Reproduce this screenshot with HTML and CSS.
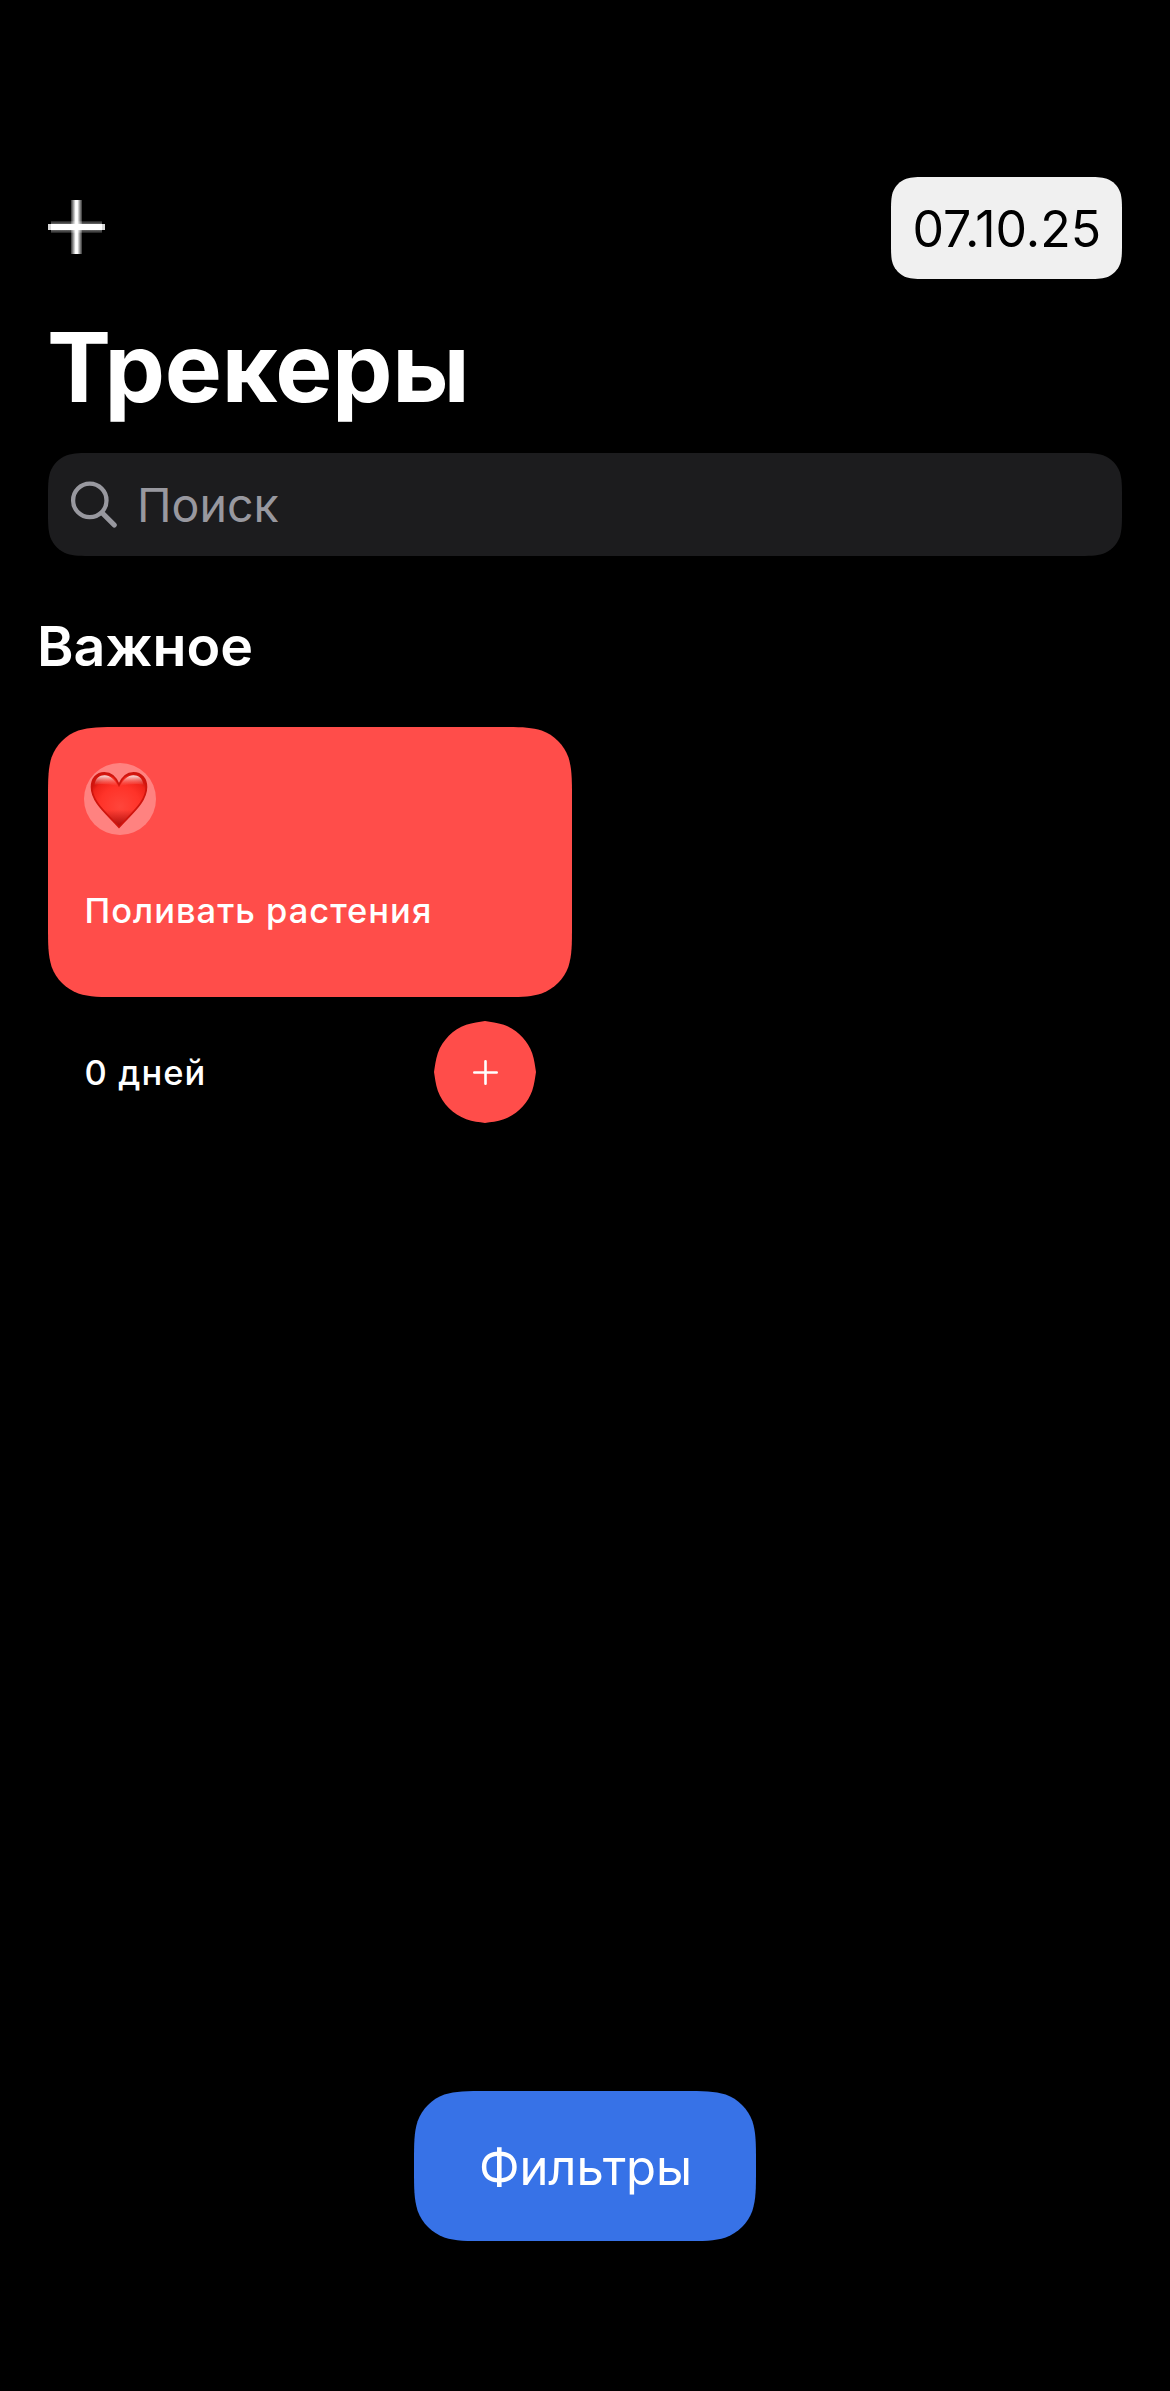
FILE: index.html
```
<!DOCTYPE html>
<html lang="ru">
<head>
<meta charset="utf-8">
<title>Трекеры</title>
<link rel="stylesheet" href="styles.css">
</head>
<body>
<main class="screen">
  <header class="topbar">
    <button class="add" aria-label="Добавить трекер">
      <svg width="57" height="54" viewBox="0 0 57 54">
        <defs>
          <linearGradient id="barH" x1="0" y1="0" x2="0" y2="1">
            <stop offset="0" stop-color="#fff" stop-opacity=".12"/>
            <stop offset=".24" stop-color="#fff" stop-opacity=".4"/>
            <stop offset=".27" stop-color="#fff"/>
            <stop offset=".73" stop-color="#fff"/>
            <stop offset=".76" stop-color="#fff" stop-opacity=".4"/>
            <stop offset="1" stop-color="#fff" stop-opacity=".12"/>
          </linearGradient>
          <linearGradient id="barV">
            <stop offset="0" stop-color="#fff" stop-opacity=".2"/>
            <stop offset=".42" stop-color="#fff"/>
            <stop offset=".58" stop-color="#fff"/>
            <stop offset="1" stop-color="#fff" stop-opacity=".2"/>
          </linearGradient>
        </defs>
        <rect x="3" y="21" width="51" height="12" fill="url(#barH)"/>
        <rect x="0" y="24" width="57" height="6" fill="#fff" fill-opacity=".85"/>
        <rect x="23" y="0" width="11" height="54" fill="url(#barV)"/>
      </svg>
    </button>
    <div class="date">07.10.25</div>
  </header>

  <h1 class="title"><span class="title-cap">Т</span>рекеры</h1>

  <div class="search">
    <svg class="search-icon" width="50" height="48" viewBox="0 0 50 48" fill="none" stroke="#98989f" stroke-linecap="round">
      <circle cx="21.800" cy="19.400" r="16.700" stroke-width="4.300"/>
      <path d="M34.300 32 46.300 44" stroke-width="5.200"/>
    </svg>
    <span class="placeholder">Поиск</span>
  </div>

  <section class="category">
    <h2 class="category-name">Важное</h2>
    <article class="tracker">
      <div class="card">
        <div class="emoji">
          <svg width="58" height="58" viewBox="0 0 58 58">
            <defs>
              <radialGradient id="heart" cx=".52" cy=".62" r=".62">
                <stop offset="0" stop-color="#ff453b"/>
                <stop offset=".6" stop-color="#ff3329"/>
                <stop offset=".88" stop-color="#f0241b"/>
                <stop offset="1" stop-color="#d4150e"/>
              </radialGradient>
              <linearGradient id="tip" x1="0" y1="0" x2="0" y2="1">
                <stop offset=".68" stop-color="#8e0000" stop-opacity="0"/>
                <stop offset="1" stop-color="#8e0000" stop-opacity=".75"/>
              </linearGradient>
              <linearGradient id="gloss" x1="0" y1="0" x2="0" y2="1">
                <stop offset="0" stop-color="#fff" stop-opacity=".9"/>
                <stop offset="1" stop-color="#ff8078" stop-opacity="0"/>
              </linearGradient>
            </defs>
            <path d="M29 13.800C26 6.200 20.500 1.800 14.300 1.800 6.700 1.800 1.600 8 1.600 16 1.600 31.500 18 43.500 29 56.200 40 43.500 56.400 31.500 56.400 16 56.400 8 51.300 1.800 43.700 1.800 37.500 1.800 32 6.200 29 13.800Z" fill="url(#heart)"/>
            <path d="M29 13.800C26 6.200 20.500 1.800 14.300 1.800 6.700 1.800 1.600 8 1.600 16 1.600 31.500 18 43.500 29 56.200 40 43.500 56.400 31.500 56.400 16 56.400 8 51.300 1.800 43.700 1.800 37.500 1.800 32 6.200 29 13.800Z" fill="url(#tip)" stroke="#cf150e" stroke-width="1.800"/>
            <path d="M4.500 14C5.500 7 9.500 4.200 14.600 4.200 20 4.200 25 8.500 27.800 15 20 13 10 12 4.500 14Z" fill="url(#gloss)"/>
            <path d="M53.500 14C52.500 7 48.500 4.200 43.400 4.200 38 4.200 33 8.500 30.200 15 38 13 48 12 53.500 14Z" fill="url(#gloss)"/>
          </svg>
        </div>
        <p class="tracker-name">Поливать растения</p>
      </div>
      <div class="tracker-footer">
        <span class="days">0 дней</span>
        <button class="done" aria-label="Отметить выполненным">
          <svg width="102" height="102" viewBox="0 0 102 102">
            <path d="M51 0C57 1 63 1.500 69.800 3.800 83 8.600 93.400 19 98.200 32.200 100.500 39 101 45 102 51 101 57 100.500 63 98.200 69.800 93.400 83 83 93.400 69.800 98.200 63 100.500 57 101 51 102 45 101 39 100.500 32.200 98.200 19 93.400 8.600 83 3.800 69.800 1.500 63 1 57 0 51 1 45 1.500 39 3.800 32.200 8.600 19 19 8.600 32.200 3.800 39 1.500 45 1 51 0Z" fill="#ff4d4a"/>
            <path d="M40.300 51.500H62.700M51.500 40.300V62.700" stroke="#fff" stroke-width="2.600" stroke-linecap="round"/>
          </svg>
        </button>
      </div>
    </article>
  </section>

  <button class="filters">Фильтры</button>
</main>
</body>
</html>
```
FILE: styles.css
```
* {
  box-sizing: border-box;
  margin: 0;
  padding: 0;
}

body {
  background: #000;
  color: #fff;
  font-family: Inter, "Liberation Sans", sans-serif;
}

button {
  border: 0;
  background: none;
  color: inherit;
  font: inherit;
}

svg {
  display: block;
}

.screen {
  display: flex;
  flex-direction: column;
  width: 1170px;
  height: 2391px;
  padding: 177px 48px 150px;
}

.topbar {
  display: flex;
  justify-content: space-between;
  height: 102px;
}

.add {
  align-self: flex-start;
  margin-top: 23px;
}

.date {
  width: 231px;
  height: 102px;
  padding: 2px 0 0 21.5px;
  background: #f0f0f0;
  color: #000;
  font-size: 50px;
  line-height: 100px;
  white-space: nowrap;
  clip-path: path("M36.7 0L194.3 0C204.9 0 210.2 0 215.8 1.8C222 4.1 226.900 9 229.200 15.200C231 20.800 231 26.100 231 36.700L231 65.300C231 75.900 231 81.200 229.200 86.800C226.900 93 222 97.900 215.800 100.200C210.200 102 204.900 102 194.300 102L36.700 102C26.100 102 20.800 102 15.200 100.200C9 97.900 4.100 93 1.800 86.800C0 81.200 0 75.900 0 65.300L0 36.700C0 26.100 0 20.800 1.800 15.200C4.100 9 9 4.100 15.200 1.800C20.800 0 26.100 0 36.700 0Z");
}

.title {
  margin-top: 38px;
  font-size: 96px;
  font-weight: 700;
  line-height: 100px;
  letter-spacing: -0.3px;
}

.title-cap {
  margin-left: -1px;
  letter-spacing: -6.5px;
}

.search {
  display: flex;
  align-items: center;
  gap: 19px;
  width: 1074px;
  height: 103px;
  margin-top: 36px;
  padding-left: 20px;
  background: #1c1c1e;
  clip-path: path("M45.900 0L1028.100 0C1041.400 0 1047.900 0 1055.100 2.200C1062.800 5.100 1068.900 11.200 1071.800 18.900C1074 26.100 1074 32.600 1074 45.900L1074 57.100C1074 70.400 1074 76.900 1071.800 84.100C1068.900 91.800 1062.800 97.900 1055.100 100.800C1047.900 103 1041.400 103 1028.100 103L45.900 103C32.600 103 26.100 103 18.900 100.800C11.200 97.900 5.100 91.800 2.200 84.100C0 76.900 0 70.400 0 57.100L0 45.900C0 32.600 0 26.100 2.200 18.900C5.100 11.200 11.200 5.100 18.900 2.200C26.100 0 32.600 0 45.900 0Z");
}

.placeholder {
  padding-top: 1px;
  color: #98989f;
  font-size: 46.5px;
  line-height: 60px;
}

.category {
  margin-top: 60px;
}

.category-name {
  margin-left: -11px;
  font-size: 55.5px;
  font-weight: 580;
  line-height: 60px;
}

.tracker {
  width: 524px;
  margin-top: 51px;
}

.card {
  height: 270px;
  padding: 36px;
  background: #ff4d4a;
  clip-path: path("M73.400 0L450.600 0C471.750 0 482.300 0 493.700 3.600C506.100 8.100 515.900 17.900 520.400 30.300C524 41.700 524 52.250 524 73.400L524 196.600C524 217.750 524 228.300 520.400 239.700C515.900 252.100 506.100 261.900 493.700 266.400C482.300 270 471.750 270 450.600 270L73.400 270C52.250 270 41.700 270 30.300 266.400C17.900 261.900 8.100 252.100 3.600 239.700C0 228.300 0 217.750 0 196.600L0 73.400C0 52.250 0 41.700 3.600 30.300C8.100 17.900 17.900 8.100 30.300 3.600C41.700 0 52.250 0 73.400 0Z");
}

.emoji {
  width: 72px;
  height: 72px;
  padding: 8px 0 0 6px;
  border-radius: 50%;
  background: rgba(255, 255, 255, 0.3);
}

.tracker-name {
  margin-top: 49px;
  padding-left: 0.5px;
  font-size: 34.5px;
  font-weight: 500;
  line-height: 54px;
  letter-spacing: 1px;
  white-space: nowrap;
}

.tracker-footer {
  display: flex;
  align-items: center;
  justify-content: space-between;
  margin-top: 24px;
  padding: 0 36px;
}

.days {
  padding: 1px 0 0 0.5px;
  font-size: 34.5px;
  font-weight: 500;
  line-height: 54px;
  letter-spacing: 1.1px;
}

.filters {
  align-self: center;
  width: 342px;
  height: 150px;
  margin-top: auto;
  padding: 3px 0 0 1px;
  background: #3772e7;
  font-size: 49px;
  line-height: 60px;
  letter-spacing: -0.15px;
  clip-path: path("M73.400 0L268.600 0C289.750 0 300.300 0 311.700 3.600C324.100 8.100 333.900 17.900 338.400 30.300C342 41.700 342 52.250 342 73.400L342 76.600C342 97.750 342 108.300 338.400 119.700C333.900 132.100 324.100 141.900 311.700 146.400C300.300 150 289.750 150 268.600 150L73.400 150C52.250 150 41.700 150 30.300 146.400C17.900 141.900 8.100 132.100 3.600 119.700C0 108.300 0 97.750 0 76.600L0 73.400C0 52.250 0 41.700 3.600 30.300C8.100 17.900 17.900 8.100 30.300 3.600C41.700 0 52.250 0 73.400 0Z");
}
```
